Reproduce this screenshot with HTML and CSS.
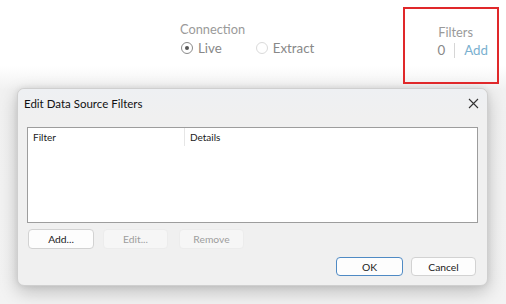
FILE: index.html
```html
<!DOCTYPE html>
<html>
<head>
<meta charset="utf-8">
<link rel="stylesheet" href="styles.css">
</head>
<body>
<header class="topbar">
  <div class="connection">
    <div class="label">Connection</div>
    <div class="radios">
      <span class="radio checked"></span><span class="rlabel live">Live</span>
      <span class="radio extract"></span><span class="rlabel">Extract</span>
    </div>
  </div>
  <div class="filters">
    <div class="label">Filters</div>
    <div class="frow"><span class="count">0</span><span class="sep"></span><span class="add">Add</span></div>
  </div>
</header>
<div class="dialog">
  <div class="titlebar">
    <span class="title">Edit Data Source Filters</span>
    <svg class="close" width="11" height="11" viewBox="0 0 11 11"><path d="M1 1L10 10M10 1L1 10" stroke="#333" stroke-width="1.1" fill="none"/></svg>
  </div>
  <div class="listbox">
    <div class="lhead">
      <div class="col c1">Filter</div>
      <div class="col c2">Details</div>
    </div>
  </div>
  <div class="actions">
    <button class="btn add-btn">Add...</button>
    <button class="btn disabled edit-btn">Edit...</button>
    <button class="btn disabled rem-btn">Remove</button>
  </div>
  <div class="footer">
    <button class="btn ok">OK</button>
    <button class="btn cancel">Cancel</button>
  </div>
</div>
</body>
</html>
```
FILE: styles.css
```css
* { box-sizing: border-box; }
html, body { margin: 0; padding: 0; }
body {
  width: 506px;
  height: 304px;
  overflow: hidden;
  background: linear-gradient(#ffffff 0, #ffffff 66px, #f1f1f1 90px, #f3f3f3 100%);
  font-family: "Lato", "Open Sans", sans-serif;
}
.topbar {
  height: 88px;
  display: flex;
  align-items: flex-start;
  padding-top: 7px;
}
.connection {
  margin-left: 180px;
  margin-top: 14px;
  color: #9a9a9a;
  font-family: "Lato", "Open Sans", sans-serif;
  font-size: 12.8px;
}
.connection .label { line-height: 17px; }
.radios {
  display: flex;
  align-items: center;
  margin-top: 1px;
  height: 18px;
}
.radio {
  width: 12px; height: 12px;
  border-radius: 50%;
  border: 1px solid #8a8a8a;
  display: inline-block;
  position: relative;
  margin-left: 1px;
}
.radio.checked::after {
  content: "";
  position: absolute;
  left: 3px; top: 3px;
  width: 4px; height: 4px;
  border-radius: 50%;
  background: #555;
}
.radio.extract { border-color: #dadada; margin-left: 0; }
.rlabel { margin-left: 5px; color: #888; font-size: 13.3px; }
.rlabel.live { margin-right: 34px; }
.filters {
  margin-left: auto;
  margin-right: 7px;
  width: 96px;
  height: 77px;
  border: 2px solid #e0282a;
  padding: 15px 9px 0 0;
  display: flex;
  flex-direction: column;
  align-items: flex-end;
  font-family: "Lato", "Open Sans", sans-serif;
  font-size: 12.8px;
  color: #9a9a9a;
}
.filters .label { line-height: 17px; margin-right: 15px; }
.frow { display: flex; align-items: center; height: 18px; font-size: 13.3px; }
.count { color: #888; }
.sep { width: 1px; height: 15px; background: #d6d6d6; margin: 0 9px 0 9px; }
.add { color: #7ab0cf; }

.dialog {
  margin-left: 17px;
  width: 471px;
  height: 198px;
  background: #f0f0f0;
  border: 1px solid #cfcfcf;
  border-radius: 7px;
  box-shadow: 0 6px 18px rgba(0,0,0,0.22), 0 0 6px rgba(0,0,0,0.08);
  display: flex;
  flex-direction: column;
  font-family: "Lato", "Open Sans", sans-serif;
  font-size: 10.3px;
  color: #1a1a1a;
}
.titlebar {
  height: 28px;
  display: flex;
  align-items: center;
  padding: 0 8px 0 6px;
  background: linear-gradient(#eef0f3, #f0f0f0);
  border-radius: 7px 7px 0 0;
}
.title { font-size: 11.5px; color: #111; }
.close { margin-left: auto; }
.listbox {
  margin: 10px 9px 0 9px;
  height: 96px;
  background: #fff;
  border: 1px solid #9d9d9d;
}
.lhead { display: flex; height: 18px; }
.col { padding-left: 5px; line-height: 18px; font-size: 10px; }
.c1 { width: 157px; border-right: 1px solid #e6e6e6; }
.actions {
  display: flex;
  margin: 6px 0 0 10px;
  gap: 9px;
}
.btn {
  font-family: "Lato", "Open Sans", sans-serif;
  font-size: 10.3px;
  height: 20px;
  padding: 0;
  border: 1px solid #d2d2d2;
  border-radius: 4px;
  background: #fdfdfd;
  color: #1a1a1a;
}
.add-btn { width: 66px; }
.edit-btn { width: 65px; }
.rem-btn { width: 65px; margin-left: 2px; }
.btn.disabled { background: #f6f6f6; border-color: #ececec; color: #9d9d9d; }
.footer {
  display: flex;
  justify-content: flex-end;
  gap: 8px;
  margin: 8px 11px 0 0;
}
.ok { width: 67px; height: 19px; border-color: #4f8ac4; }
.cancel { width: 65px; height: 19px; }
```
